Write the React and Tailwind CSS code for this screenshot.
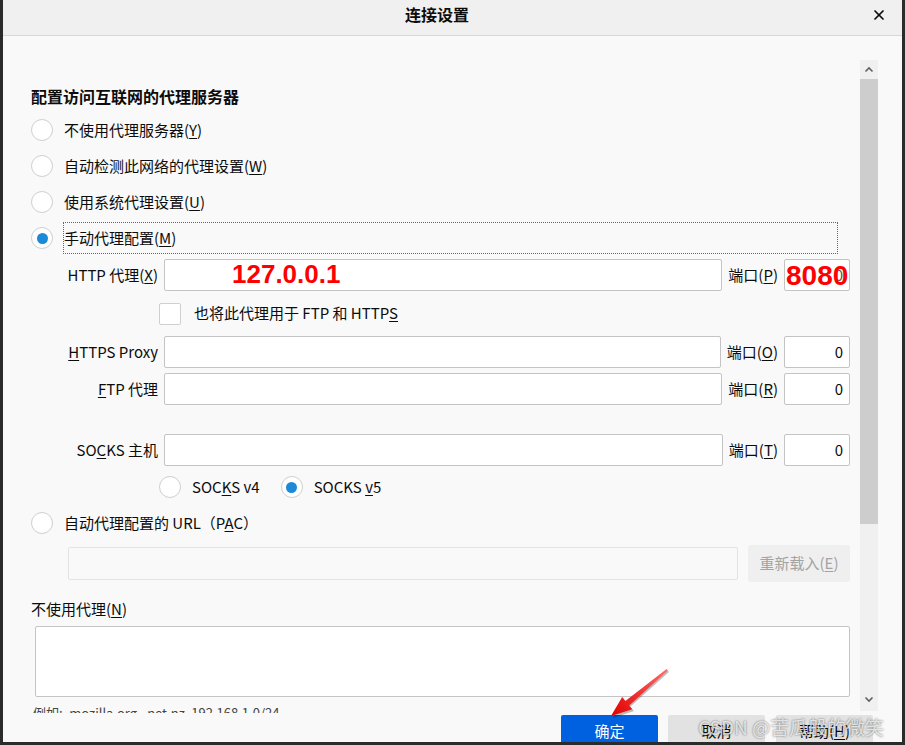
import { X } from "lucide-react";

function Radio({ checked, className = "" }) {
  return (
    <span
      className={`flex h-[22px] w-[22px] shrink-0 items-center justify-center rounded-full border border-[#cfcfcf] bg-white ${className}`}
    >
      {checked && <span className="h-[11px] w-[11px] rounded-full bg-[#1b8ad8]" />}
    </span>
  );
}

function Field({ label, port, portKey, height = "h-[32px]", children }) {
  return (
    <div className="flex items-center">
      <div className="w-[133px] shrink-0 pr-[6px] text-right">{label}</div>
      <div className={`relative flex-1 ${height} rounded-[2px] border border-[#c4c4c4] bg-white`}>
        {children}
      </div>
      <div className="ml-[6px] mr-[6px] shrink-0">
        端口(<u className="underline-offset-2">{portKey}</u>)
      </div>
      <div className={`relative w-[66px] shrink-0 ${height} rounded-[2px] border border-[#c4c4c4] bg-white text-right pr-[6px] leading-[30px]`}>
        {port}
      </div>
    </div>
  );
}

function Chevron({ up }) {
  return (
    <svg width="10" height="7" viewBox="0 0 10 7" className="text-[#606060]">
      <path
        d={up ? "M1.5 5.5 L5 2 L8.5 5.5" : "M1.5 1.5 L5 5 L8.5 1.5"}
        fill="none"
        stroke="currentColor"
        strokeWidth="1.6"
      />
    </svg>
  );
}

export default function App() {
  return (
    <div className="relative h-[745px] w-[905px] overflow-hidden bg-[#2b2b2b] pb-[3px] pl-[3px] pr-[3px] font-['Noto_Sans_CJK_SC','Noto_Sans',sans-serif] text-[15px] text-[#0c0c0d]">
      <div className="flex h-full flex-col overflow-hidden bg-[#f9f9f9]">
        {/* Title bar */}
        <div className="flex h-[36px] shrink-0 items-start border-b border-[#d8d8d8] bg-[#f0f0f0]">
          <div className="flex-1 pt-[3px] text-center text-[16px] font-bold leading-[22px]">
            连接设置
          </div>
          <X className="mr-[15px] mt-[7px] h-[16px] w-[16px]" strokeWidth={2.6} />
        </div>

        {/* Scroll area */}
        <div className="flex h-[677px] shrink-0">
          <div className="flex-1 overflow-hidden pl-[28px] pt-[48px]">
            <div className="h-[24px] text-[16px] font-bold leading-[24px]">配置访问互联网的代理服务器</div>

            <div className="mt-[4px]">
              <div className="flex h-[36px] items-center">
                <Radio />
                <span className="ml-[11px]">
                  不使用代理服务器(<u className="underline-offset-2">Y</u>)
                </span>
              </div>
              <div className="flex h-[36px] items-center">
                <Radio />
                <span className="ml-[11px]">
                  自动检测此网络的代理设置(<u className="underline-offset-2">W</u>)
                </span>
              </div>
              <div className="flex h-[36px] items-center">
                <Radio />
                <span className="ml-[11px]">
                  使用系统代理设置(<u className="underline-offset-2">U</u>)
                </span>
              </div>
              <div className="flex h-[36px] items-center">
                <Radio checked />
                <div className="ml-[10px] mr-[22px] flex h-[32px] flex-1 items-center border border-dotted border-[#666]">
                  <span>
                    手动代理配置(<u className="underline-offset-2">M</u>)
                  </span>
                </div>
              </div>
            </div>

            <div className="mr-[10px] mt-[3px]">
              <Field
                label={
                  <>
                    HTTP 代理(<u className="underline-offset-2">X</u>)
                  </>
                }
                portKey="P"
                port={
                  <>
                    <span className="text-[#555]">0</span>
                    <span className="absolute left-[1px] top-[-4px] font-['Liberation_Sans',sans-serif] text-[28px] font-bold leading-[40px] text-[#ff0000]">
                      8080
                    </span>
                  </>
                }
              >
                <span className="absolute left-[67px] top-[-6px] font-['Liberation_Sans',sans-serif] text-[26px] font-bold leading-[40px] text-[#ff0000]">
                  127.0.0.1
                </span>
              </Field>

              <div className="flex h-[45px] items-center pl-[128px]">
                <span className="h-[22px] w-[22px] rounded-[2px] border border-[#cfcfcf] bg-white" />
                <span className="ml-[13px]">
                  也将此代理用于 FTP 和 HTTP<u className="underline-offset-2">S</u>
                </span>
              </div>

              <Field
                label={
                  <>
                    <u className="underline-offset-2">H</u>TTPS Proxy
                  </>
                }
                portKey="O"
                port="0"
              />
              <div className="mt-[5px]">
                <Field
                  label={
                    <>
                      <u className="underline-offset-2">F</u>TP 代理
                    </>
                  }
                  portKey="R"
                  port="0"
                />
              </div>
              <div className="mt-[29px]">
                <Field
                  label={
                    <>
                      SO<u className="underline-offset-2">C</u>KS 主机
                    </>
                  }
                  portKey="T"
                  port="0"
                />
              </div>

              <div className="flex h-[42px] items-center pl-[128px]">
                <Radio />
                <span className="ml-[11px]">
                  SOC<u className="underline-offset-2">K</u>S v4
                </span>
                <Radio checked className="ml-[21px]" />
                <span className="ml-[11px]">
                  SOCKS <u className="underline-offset-2">v</u>5
                </span>
              </div>
            </div>

            <div className="flex h-[30px] items-center">
              <Radio />
              <span className="ml-[11px]">
                自动代理配置的 URL（P<u className="underline-offset-2">A</u>C）
              </span>
            </div>

            <div className="mr-[10px] mt-[7px] flex h-[37px] items-center pl-[37px]">
              <div className="h-[33px] flex-1 rounded-[2px] border border-[#e3e3e3] bg-[#f9f9f9]" />
              <div className="ml-[10px] flex h-[37px] w-[102px] items-center justify-center rounded-[3px] bg-[#efefef] text-[#a3a3a3]">
                重新载入(<u className="underline-offset-2">E</u>)
              </div>
            </div>

            <div className="mt-[16px] h-[22px] leading-[22px]">
              不使用代理(<u className="underline-offset-2">N</u>)
            </div>
            <div className="ml-[4px] mr-[10px] mt-[6px] h-[71px] rounded-[2px] border border-[#c4c4c4] bg-white" />
            <div className="ml-[2px] mt-[6px] whitespace-nowrap text-[13px] leading-[20px] text-[#444]">
              例如: .mozilla.org, .net.nz, 192.168.1.0/24
            </div>
          </div>

          {/* Scrollbar */}
          <div className="mr-[24px] mt-[24px] flex h-[651px] w-[18px] flex-col bg-[#f0f0f0]">
            <div className="flex h-[19px] items-center justify-center">
              <Chevron up />
            </div>
            <div className="h-[445px] bg-[#cdcdcd]" />
            <div className="flex flex-1 items-end justify-center pb-[8px]">
              <Chevron />
            </div>
          </div>
        </div>

        {/* Buttons */}
        <div className="flex flex-1 justify-end pr-[29px] pt-[2px]">
          <div className="flex h-[32px] w-[97px] items-center justify-center rounded-[2px] bg-[#0061e0] text-white">
            确定
          </div>
          <div className="ml-[10px] flex h-[32px] w-[97px] items-center justify-center rounded-[2px] bg-[#e2e2e2]">
            取消
          </div>
          <div className="ml-[11px] flex h-[32px] w-[97px] items-center justify-center rounded-[2px] bg-[#e2e2e2]">
            帮助(<u className="underline-offset-2">H</u>)
          </div>
        </div>
      </div>

      {/* Red annotation arrow */}
      <svg className="pointer-events-none absolute left-0 top-0" width="905" height="745">
        <defs>
          <linearGradient id="arrowGrad" x1="667" y1="670" x2="612" y2="716" gradientUnits="userSpaceOnUse">
            <stop offset="0" stopColor="#ff6a6a" />
            <stop offset="1" stopColor="#e00000" />
          </linearGradient>
        </defs>
        <polygon
          points="613,718 634,711 630,707 669,672 667,670 626,702 623,698"
          fill="#000"
          opacity="0.25"
        />
        <polygon
          points="611,716 632.4,709.3 629.2,705.5 667.8,670.6 666.6,669 625.4,700.9 622.2,697.1"
          fill="url(#arrowGrad)"
        />
      </svg>

      {/* Watermark */}
      <div className="pointer-events-none absolute left-[698px] top-[713px] whitespace-nowrap text-[19px] leading-[28px] text-white/75 [text-shadow:0_0_2px_rgba(0,0,0,0.6)]">
        CSDN @苦瓜般的微笑
      </div>
    </div>
  );
}
